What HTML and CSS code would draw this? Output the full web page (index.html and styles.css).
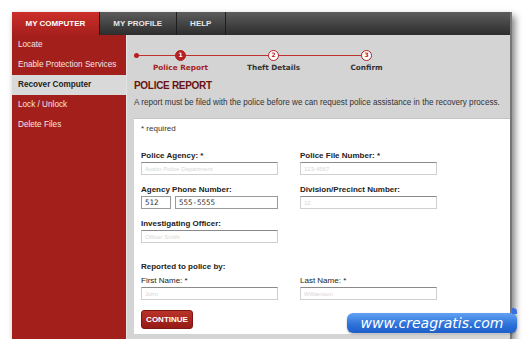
FILE: index.html
```html
<!DOCTYPE html>
<html lang="en">
<head>
    <meta charset="UTF-8">
    <meta name="viewport" content="width=device-width, initial-scale=1.0">
    <title>Recover Computer</title>
    <link rel="stylesheet" href="styles.css">
</head>
<body>

<div class="window">
    <div class="tabs">
        <div class="tab active">MY COMPUTER</div>
        <div class="tab">MY PROFILE</div>
        <div class="tab">HELP</div>
    </div>

    <div class="main">
        <ul class="side-menu">
            <li>Locate</li>
            <li>Enable Protection Services</li>
            <li class="current">Recover Computer</li>
            <li>Lock / Unlock</li>
            <li>Delete Files</li>
        </ul>

        <div class="content">
            <div class="steps">
                <div class="step current"><span class="dot">1</span><span class="step-name">Police Report</span></div>
                <div class="step"><span class="dot">2</span><span class="step-name">Theft Details</span></div>
                <div class="step"><span class="dot">3</span><span class="step-name">Confirm</span></div>
            </div>

            <h2>POLICE REPORT</h2>
            <p class="intro">A report must be filed with the police before we can request police assistance in the recovery process.</p>

            <div class="panel">
                <p class="required">* required</p>

                <div class="form-grid">
                    <div class="field">
                        <label for="agency">Police Agency: *</label>
                        <input type="text" id="agency" value="Austin Police Department" readonly>
                    </div>
                    <div class="field">
                        <label for="file-no">Police File Number: *</label>
                        <input type="text" id="file-no" value="123-4567" readonly>
                    </div>
                    <div class="field">
                        <label for="area">Agency Phone Number:</label>
                        <div class="phone">
                            <input type="text" id="area" class="area" value="512" readonly>
                            <input type="text" class="number" value="555-5555" readonly>
                        </div>
                    </div>
                    <div class="field">
                        <label for="division">Division/Precinct Number:</label>
                        <input type="text" id="division" value="12" readonly>
                    </div>
                    <div class="field">
                        <label for="officer">Investigating Officer:</label>
                        <input type="text" id="officer" value="Officer Smith" readonly>
                    </div>
                </div>

                <p class="sub-title">Reported to police by:</p>
                <div class="form-grid names">
                    <div class="field">
                        <label for="first">First Name: *</label>
                        <input type="text" id="first" value="John" readonly>
                    </div>
                    <div class="field">
                        <label for="last">Last Name: *</label>
                        <input type="text" id="last" value="Williamson" readonly>
                    </div>
                </div>

                <button class="btn-continue">CONTINUE</button>
            </div>
        </div>
    </div>
</div>

<div class="watermark">www.creagratis.com</div>

</body>
</html>
```

FILE: styles.css
```css
body {
    font-family: "Liberation Sans", Arial, sans-serif;
    background-color: #fff;
    margin: 0;
    padding: 12px 0 0 12px;
}
.window {
    width: 500px;
    height: 327px;
    display: flex;
    flex-direction: column;
    box-sizing: border-box;
    border-right: 2px solid #777;
    box-shadow: 3px 4px 7px rgba(0, 0, 0, 0.5);
}
.tabs {
    height: 23px;
    display: flex;
    background: linear-gradient(#5c5c5c, #2d2d2d);
}
.tab {
    display: flex;
    align-items: center;
    padding: 0 13.5px;
    font-size: 8px;
    font-weight: bold;
    color: #e6e6e6;
    border-right: 1px solid #1e1e1e;
}
.tab.active {
    color: #fff;
    background: linear-gradient(#cc2f2b, #a61f1c);
}
.main {
    flex: 1;
    display: flex;
}
.side-menu {
    width: 114px;
    margin: 0;
    padding: 0;
    list-style: none;
    background: #a31f1c;
}
.side-menu li {
    height: 20px;
    line-height: 20px;
    padding-left: 6px;
    font-size: 8.2px;
    color: #f6e4e4;
}
.side-menu li.current {
    background: #d9d9d9;
    color: #222;
    font-weight: bold;
}
.content {
    flex: 1;
    display: flex;
    flex-direction: column;
    background: #d4d4d4;
    border-left: 1px solid #e4e4e4;
    padding: 15px 0 5px 7px;
}

/* wizard steps */
.steps {
    position: relative;
    display: flex;
}
.steps::before {
    content: "";
    position: absolute;
    left: 2px;
    top: 5px;
    width: 231px;
    height: 1px;
    background: #c0302c;
}
.steps::after {
    content: "";
    position: absolute;
    left: 0;
    top: 3px;
    width: 5px;
    height: 5px;
    border-radius: 50%;
    background: #b52020;
}
.step {
    width: 93px;
    display: flex;
    flex-direction: column;
    align-items: center;
    position: relative;
    z-index: 1;
}
.dot {
    width: 11px;
    height: 11px;
    box-sizing: border-box;
    border-radius: 50%;
    border: 1.5px solid #b52020;
    background: #fff;
    color: #b52020;
    font-family: "DejaVu Sans", sans-serif;
    font-size: 6px;
    font-weight: bold;
    line-height: 8px;
    text-align: center;
}
.step.current .dot {
    background: #b52020;
    color: #fff;
}
.step-name {
    margin-top: 2px;
    font-family: "DejaVu Sans", sans-serif;
    font-size: 7.3px;
    font-weight: bold;
    line-height: 9px;
    color: #333;
}
.step.current .step-name {
    color: #a52323;
}

h2 {
    margin: 8px 0 0;
    font-size: 10px;
    line-height: 12px;
    letter-spacing: -0.3px;
    color: #6b1111;
}
.intro {
    margin: 6px 0 0;
    font-size: 8.15px;
    line-height: 10px;
    color: #333;
}

/* form panel */
.panel {
    flex: 1;
    margin-top: 10px;
    background: #fff;
    border-top: 1px solid #c4c4c4;
    padding: 5px 7px 5px 7px;
}
.required {
    margin: 0;
    font-size: 8px;
    line-height: 10px;
    color: #333;
}
.form-grid {
    display: grid;
    grid-template-columns: 137px 137px;
    column-gap: 22px;
    row-gap: 10px;
    margin-top: 17px;
}
.field label {
    display: block;
    font-size: 8px;
    font-weight: bold;
    line-height: 10px;
    margin-bottom: 1px;
    color: #222;
}
.field input {
    display: block;
    width: 137px;
    height: 13px;
    box-sizing: border-box;
    margin: 0;
    border: 1px solid #cfcfcf;
    border-top-color: #8a8a8a;
    padding: 0 3px;
    font-family: "Liberation Sans", Arial, sans-serif;
    font-size: 6px;
    color: #d6d6d6;
}
.phone {
    display: flex;
    gap: 4px;
}
.phone input {
    border-color: #9a9a9a;
    font-family: "DejaVu Sans Mono", monospace;
    font-size: 7.5px;
    color: #333;
}
.phone .area {
    width: 30px;
}
.phone .number {
    width: 103px;
}
.sub-title {
    margin: 19px 0 0;
    font-size: 8px;
    font-weight: bold;
    line-height: 10px;
    color: #222;
}
.names {
    margin-top: 4px;
}
.names .field label {
    font-weight: normal;
}
.btn-continue {
    margin-top: 10px;
    width: 52px;
    height: 19px;
    padding: 0;
    background: linear-gradient(#b9332a, #951b15);
    border: 1px solid #7b1610;
    border-radius: 3px;
    color: #fff;
    font-family: "Liberation Sans", Arial, sans-serif;
    font-size: 8px;
    font-weight: bold;
}

/* site watermark over the screenshot */
.watermark {
    position: absolute;
    left: 347px;
    top: 313px;
    width: 170px;
    height: 20px;
    border-radius: 6px;
    background: linear-gradient(#62a2f3, #2b70d9 60%, #1f5ec8);
    box-shadow: 0 1px 2px rgba(0, 0, 0, 0.3);
    color: #fff;
    font-family: "DejaVu Sans", sans-serif;
    font-style: italic;
    font-size: 14px;
    line-height: 20px;
    text-align: center;
}
.watermark::before {
    content: "";
    position: absolute;
    right: 0;
    top: -5px;
    width: 5px;
    height: 6px;
    border-radius: 0 4px 0 0;
    background: #3a6fe3;
}
```
